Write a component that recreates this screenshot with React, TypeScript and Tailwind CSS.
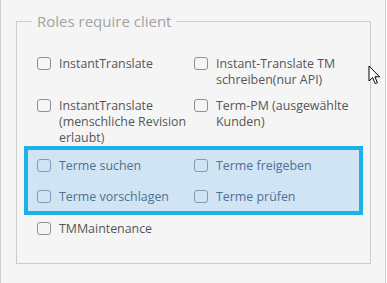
const font = { fontFamily: '"Open Sans", "Liberation Sans", sans-serif' }

type Item = { lines: string[] }

function Check({ label, hl }: { label: string[]; hl?: boolean }) {
  return (
    <label className="flex items-start gap-[8px]">
      <span
        className={
          'mt-[1px] h-[13px] w-[14px] shrink-0 rounded-[3px] border ' +
          (hl ? 'border-[#7e9cb8]' : 'border-[#8f8f8f]')
        }
      />
      <span className={hl ? 'text-[#4d7192]' : 'text-[#555555]'}>
        {label.map((l) => (
          <span key={l} className="block">
            {l}
          </span>
        ))}
      </span>
    </label>
  )
}

function Row({ left, right, hl }: { left: Item; right?: Item; hl?: boolean }) {
  return (
    <div className="grid grid-cols-[157px_1fr]">
      <Check label={left.lines} hl={hl} />
      {right && <Check label={right.lines} hl={hl} />}
    </div>
  )
}

export default function App() {
  return (
    <div
      className="relative h-[283px] w-[386px] overflow-hidden border-l border-r border-[#cfcfcf] bg-[#f5f5f5]"
      style={font}
    >
      <fieldset className="ml-[15px] mt-[11px] h-[253px] w-[355px] border border-[#cccccc] px-[7px] text-[12.4px] leading-[16px]">
        <legend className="ml-[8px] px-[5px] text-[15px] leading-[20px] text-[#a3a3a3]">
          Roles require client
        </legend>

        <div className="pl-[13px] pt-[25px]">
          <Row
            left={{ lines: ['InstantTranslate'] }}
            right={{ lines: ['Instant-Translate TM', 'schreiben(nur API)'] }}
          />
        </div>
        <div className="mt-[10px] pl-[13px]">
          <Row
            left={{ lines: ['InstantTranslate', '(menschliche Revision', 'erlaubt)'] }}
            right={{ lines: ['Term-PM (ausgewählte', 'Kunden)'] }}
          />
        </div>

        <div className="flex flex-col gap-[15px] border-4 border-[#1db1ea] bg-[#d1e4f3] pb-[6px] pl-[9px] pt-[8px]">
          <Row hl left={{ lines: ['Terme suchen'] }} right={{ lines: ['Terme freigeben'] }} />
          <Row hl left={{ lines: ['Terme vorschlagen'] }} right={{ lines: ['Terme prüfen'] }} />
        </div>

        <div className="mt-[6px] pl-[13px]">
          <Row left={{ lines: ['TMMaintenance'] }} />
        </div>
      </fieldset>

      <svg
        className="absolute left-[367px] top-[65px]"
        width="13"
        height="20"
        viewBox="0 0 13 20"
      >
        <path
          d="M1 1 L1 16 L4.6 12.6 L7.2 18.6 L9.4 17.6 L6.9 11.8 L11.6 11.8 Z"
          fill="#ffffff"
          stroke="#000000"
          strokeWidth="1"
          strokeLinejoin="round"
        />
      </svg>
    </div>
  )
}
